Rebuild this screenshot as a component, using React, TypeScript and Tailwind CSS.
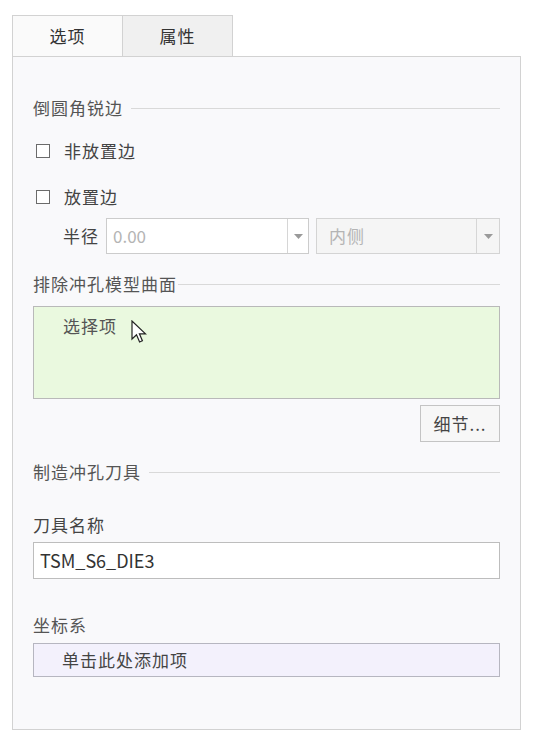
import React from "react";

const font = { fontFamily: '"Noto Sans CJK SC", "Noto Sans", sans-serif' };

function SectionHeader({ text, gap }: { text: string; gap: string }) {
  return (
    <div className="flex items-center h-6">
      <span className="text-[17px] tracking-[1px] text-[#555555] leading-6 whitespace-nowrap">{text}</span>
      <div className={`flex-1 h-px bg-[#d9d9d9] ${gap}`} />
    </div>
  );
}

function Arrow() {
  return (
    <svg width="9" height="5" viewBox="0 0 9 5">
      <path d="M0 0 L9 0 L4.5 5 Z" fill="#9a9a9a" />
    </svg>
  );
}

function Checkbox({ label, mt }: { label: string; mt: string }) {
  return (
    <div className={`flex items-center h-6 ${mt}`}>
      <div className="w-[14px] h-[14px] ml-[3px] border border-[#6b6b6b] bg-white" />
      <span className="ml-[14px] text-[17px] tracking-[1px] text-[#444444] leading-6">{label}</span>
    </div>
  );
}

export default function App() {
  return (
    <div className="w-[534px] h-[741px] bg-white relative" style={font}>
      <div className="pt-[15px] pl-[12px] w-[521px]">
        {/* tabs */}
        <div className="flex h-[41px]">
          <div className="w-[111px] h-full border border-b-0 border-[#d2d2d2] bg-[#fafafa] flex items-center justify-center text-[17px] tracking-[1px] text-[#333333]">
            选项
          </div>
          <div className="w-[110px] h-full border border-l-0 border-b-0 border-[#d2d2d2] bg-[#f0f0f0] flex items-center justify-center text-[17px] tracking-[1px] text-[#333333]">
            属性
          </div>
        </div>
        {/* panel */}
        <div className="h-[674px] border border-[#d2d2d2] bg-[#f9f9fb] px-[20px] pt-[39px] flex flex-col">
          <SectionHeader text="倒圆角锐边" gap="ml-[8px]" />
          <Checkbox label="非放置边" mt="mt-[19px]" />
          <Checkbox label="放置边" mt="mt-[22px]" />
          <div className="flex items-center mt-[9px] h-[36px]">
            <span className="ml-[30px] w-[43px] text-[17px] tracking-[1px] text-[#444444]">半径</span>
            <div className="flex h-full w-[203px] border border-[#cccccc] bg-white">
              <div className="flex-1 flex items-center pl-[6px] text-[17px] text-[#b4b4b4]">0.00</div>
              <div className="w-[21px] border-l border-[#d6d6d6] flex items-center justify-center">
                <Arrow />
              </div>
            </div>
            <div className="flex h-full flex-1 ml-[7px] border border-[#d4d4d4] bg-[#f5f5f5]">
              <div className="flex-1 flex items-center pl-[12px] text-[17px] tracking-[1px] text-[#b4b4b4]">内侧</div>
              <div className="w-[23px] border-l border-[#d6d6d6] flex items-center justify-center">
                <Arrow />
              </div>
            </div>
          </div>
          <div className="mt-[18px]">
            <SectionHeader text="排除冲孔模型曲面" gap="ml-[1px]" />
          </div>
          <div className="mt-[10px] h-[93px] border border-[#b9b9b9] bg-[#eaf9df] relative">
            <span className="absolute left-[29px] top-[6px] text-[17px] tracking-[1px] text-[#555555]">选择项</span>
            <svg className="absolute left-[97px] top-[13px]" width="16" height="26" viewBox="0 0 16 26">
              <path
                d="M1 1 L1 19 L5.5 14.8 L8.6 22 L11.4 20.8 L8.4 13.8 L14.5 13.8 Z"
                fill="#ffffff"
                stroke="#222222"
                strokeWidth="1.2"
                strokeLinejoin="miter"
              />
            </svg>
          </div>
          <div className="flex justify-end mt-[6px]">
            <div className="w-[80px] h-[37px] border border-[#c4c4c4] bg-[#f7f7f7] flex items-center justify-center text-[17px] tracking-[1px] text-[#444444]">
              细节...
            </div>
          </div>
          <div className="mt-[18px]">
            <SectionHeader text="制造冲孔刀具" gap="ml-[8px]" />
          </div>
          <div className="mt-[29px] h-6 text-[17px] tracking-[1px] text-[#444444] leading-6">刀具名称</div>
          <div className="mt-[5px] h-[37px] border border-[#bdbdbd] bg-white flex items-center pl-[6px] text-[18px] text-[#333333]">
            TSM_S6_DIE3
          </div>
          <div className="mt-[34px] h-6 text-[17px] tracking-[1px] text-[#555555] leading-6">坐标系</div>
          <div className="mt-[6px] h-[34px] border border-[#b6b6c0] bg-[#f3f1fc] flex items-center pl-[28px] text-[17px] tracking-[1px] text-[#444444]">
            单击此处添加项
          </div>
        </div>
      </div>
    </div>
  );
}
